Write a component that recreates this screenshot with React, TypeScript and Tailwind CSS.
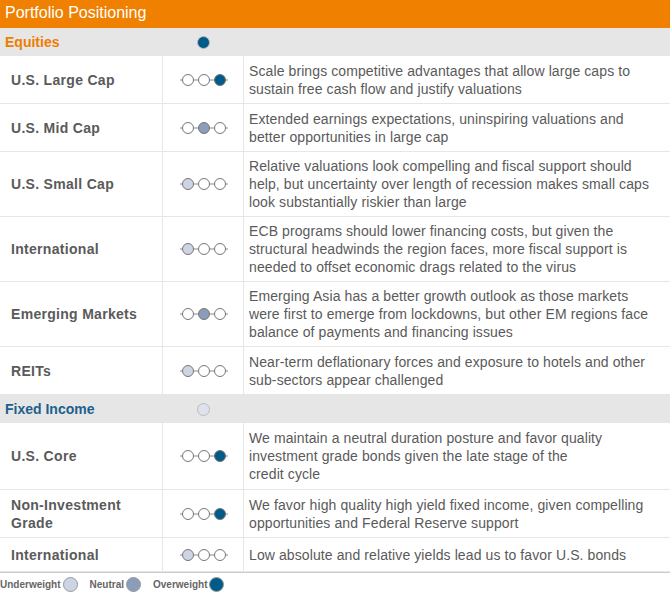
import React from "react";

const C = { u: "#cdd4e4", n: "#8b9dba", o: "#005b88" };
type R = { l: string; p: 0 | 1 | 2; t: string; h: number };

function Dots({ p }: { p: number }) {
  return (
    <svg width="50" height="14" viewBox="0 0 50 14">
      <line x1="1" y1="7" x2="49" y2="7" stroke="#888" strokeWidth="1" />
      {[0, 1, 2].map((i) => (
        <circle key={i} cx={9 + i * 16} cy="7" r="5.5" fill={i === p ? [C.u, C.n, C.o][p] : "#fff"} stroke="#777" strokeWidth="1" />
      ))}
    </svg>
  );
}

const eq: R[] = [
  { l: "U.S. Large Cap", p: 2, h: 48, t: "Scale brings competitive advantages that allow large caps to sustain free cash flow and justify valuations" },
  { l: "U.S. Mid Cap", p: 1, h: 48, t: "Extended earnings expectations, uninspiring valuations and better opportunities in large cap" },
  { l: "U.S. Small Cap", p: 0, h: 65, t: "Relative valuations look compelling and fiscal support should help, but uncertainty over length of recession makes small caps look substantially riskier than large" },
  { l: "International", p: 0, h: 65, t: "ECB programs should lower financing costs, but given the structural headwinds the region faces, more fiscal support is needed to offset economic drags related to the virus" },
  { l: "Emerging Markets", p: 1, h: 65, t: "Emerging Asia has a better growth outlook as those markets were first to emerge from lockdowns, but other EM regions face balance of payments and financing issues" },
  { l: "REITs", p: 0, h: 48, t: "Near-term deflationary forces and exposure to hotels and other sub-sectors appear challenged" },
];
const fi: R[] = [
  { l: "U.S. Core", p: 2, h: 67, t: "We maintain a neutral duration posture and favor quality investment grade bonds given the late stage of the\ncredit cycle" },
  { l: "Non-Investment Grade", p: 2, h: 48, t: "We favor high quality high yield fixed income, given compelling opportunities and Federal Reserve support" },
  { l: "International", p: 0, h: 34, t: "Low absolute and relative yields lead us to favor U.S. bonds" },
];

function Row({ r }: { r: R }) {
  return (
    <div className="flex border-b border-[#e6e6e6]" style={{ height: r.h }}>
      <div className="w-[163px] flex items-center pl-[11px] pr-3 font-bold text-[14px] leading-[18px] text-[#5a5a5a] border-r border-[#e6e6e6] tracking-[0.3px]">{r.l}</div>
      <div className="w-[81px] flex items-center justify-center border-r border-[#e6e6e6] pl-[1px]"><Dots p={r.p} /></div>
      <div className="flex-1 flex items-center pl-[5px] pr-2 text-[14px] leading-[18px] text-[#5a5a5a] whitespace-pre-line tracking-[0.1px]">{r.t}</div>
    </div>
  );
}

function Sec({ t, c }: { t: string; c: string }) {
  return (
    <div className="flex h-[28px] bg-[#e6e6e6] items-center">
      <div className="w-[163px] pl-[5px] font-bold text-[14px]" style={{ color: c === C.o ? "#ef7d00" : "#1d5f8c" }}>{t}</div>
      <div className="w-[81px] flex justify-center">
        <span className="w-[13px] h-[13px] rounded-full border border-[#bbb]" style={{ background: c }} />
      </div>
    </div>
  );
}

export default function App() {
  return (
    <div className="w-[670px] h-[598px] bg-white" style={{ fontFamily: "'Liberation Sans', Arial, sans-serif" }}>
      <div className="h-[28px] bg-[#f08000] text-white text-[16px] flex items-end pb-[3px] pl-[5px]">Portfolio Positioning</div>
      <Sec t="Equities" c={C.o} />
      {eq.map((r) => <Row key={r.l} r={r} />)}
      <Sec t="Fixed Income" c="#dde2ed" />
      {fi.map((r) => <Row key={r.l + "f"} r={r} />)}
      <div className="flex items-center h-[24px] text-[10px] font-bold text-[#666] gap-[2px] border-t border-[#ccc]">
        <span>Underweight</span><span className="w-[15px] h-[15px] rounded-full border border-[#999] bg-[#cdd4e4] mr-[10px]" />
        <span>Neutral</span><span className="w-[15px] h-[15px] rounded-full border border-[#999] bg-[#8b9dba] mr-[10px]" />
        <span>Overweight</span><span className="w-[15px] h-[15px] rounded-full border border-[#999] bg-[#005b88]" />
      </div>
    </div>
  );
}
